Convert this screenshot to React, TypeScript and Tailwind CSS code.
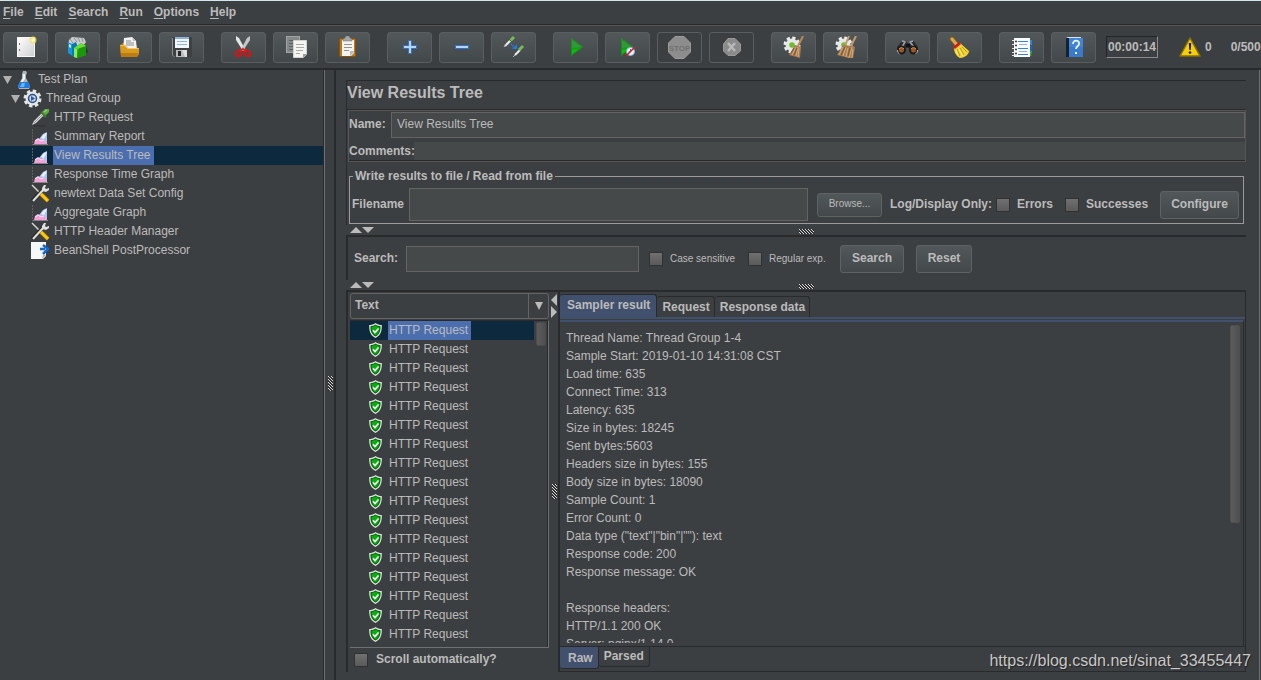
import React, { useState } from "react";

const menus = ["File", "Edit", "Search", "Run", "Options", "Help"];

const NewIcon = () => (
  <svg width="23" height="23" viewBox="0 0 23 23">
    <defs>
      <linearGradient id="page" x1="0" y1="0" x2="1" y2="1">
        <stop offset="0" stopColor="#ffffff" />
        <stop offset="1" stopColor="#cfcfd2" />
      </linearGradient>
    </defs>
    <rect x="3.500" y="1.500" width="17" height="19" fill="url(#page)" stroke="#f7f7f7" />
    <path d="M5 7h1v2H5zM5 13h1v2H5z" fill="#777" />
    <circle cx="19" cy="4" r="3.500" fill="#f5e65e" opacity=".8" />
    <circle cx="19" cy="4" r="1.500" fill="#fffef0" />
  </svg>
);

const TemplatesIcon = () => (
  <svg width="23" height="23" viewBox="0 0 23 23">
    <path d="M3 4l3-3 12 1 2 4-6 8L2 9z" fill="#c9cdd0" />
    <path d="M4 3l3 4M8 2l3 4M12 2l2 4M16 2l1 4" stroke="#8b9094" />
    <path d="M2 6l6 3v12l-6-4z" fill="#1796d6" />
    <path d="M3 8l2 1v3l-2-1z" fill="#c9edff" />
    <path d="M6 8l4-2 1 3v11l-3 1-2-2z" fill="#0a76b8" />
    <path d="M18 19l4-3-2-6z" fill="#1d2f24" opacity=".7" />
    <path d="M8 12l7-5 5 3v9l-9 3-3-1z" fill="#2fb012" />
    <path d="M13 12l7-2v9l-9 3z" fill="#1c970b" />
    <path d="M8 12l3 1v9l-3-1z" fill="#8ae85d" />
    <path d="M15 7l5 3-9 3-3-1z" fill="#6cdc35" />
  </svg>
);

const OpenIcon = () => (
  <svg width="23" height="23" viewBox="0 0 23 23">
    <path d="M2 9l2-2h4l2 2h9l1 11H3z" fill="#a86c08" />
    <path d="M6 2l8-1 4 4 1 9H5z" fill="#f2f2f2" />
    <path d="M14 1l1 4h3" fill="#c4c4c4" />
    <path d="M8 5h5M8 7h8M8 9h8" stroke="#8b8b8b" />
    <path d="M2 9h5l3 3h11v6l-2 3H3z" fill="#d89b22" />
    <path d="M2.500 9.500h4l3 3h11" stroke="#f2c868" fill="none" />
    <path d="M3 17h18l-2 4H3z" fill="#bd7d0e" />
  </svg>
);

const SaveIcon = () => (
  <svg width="23" height="23" viewBox="0 0 23 23">
    <path d="M2 2l1-1h18l1 1v19H4l-2-2z" fill="#3f4042" />
    <path d="M2.500 2v17l2 2" stroke="#8b8d90" fill="none" />
    <rect x="5" y="1" width="14" height="11" fill="#f1f6fb" />
    <rect x="5" y="1" width="14" height="2" fill="#8db3dc" />
    <path d="M7 5.500h10M7 8.500h10" stroke="#92b4da" />
    <rect x="6" y="14" width="11" height="7" fill="#b9bbbd" />
    <rect x="8" y="15" width="3" height="5" fill="#26282a" />
    <path d="M12 14h5v7h-2z" fill="#dedfe0" />
  </svg>
);

const CutIcon = () => (
  <svg width="23" height="23" viewBox="0 0 23 23">
    <path d="M4 0l3 2 6 11-2 2L4 4z" fill="#e4e4e4" />
    <path d="M18 0l-3 2-6 11 2 2 7-11z" fill="#c3c4c4" />
    <ellipse cx="6.500" cy="17.500" rx="3" ry="2.500" transform="rotate(-35 6.500 17.500)" fill="none" stroke="#d81313" strokeWidth="2" />
    <ellipse cx="15.500" cy="17.500" rx="3" ry="2.500" transform="rotate(35 15.500 17.500)" fill="none" stroke="#d81313" strokeWidth="2" />
    <path d="M8 15l3-2 3 2" stroke="#e32020" strokeWidth="2" fill="none" />
  </svg>
);

const CopyIcon = () => (
  <svg width="23" height="23" viewBox="0 0 23 23">
    <rect x="2.500" y=".5" width="13" height="16" fill="#858889" stroke="#a2a5a6" />
    <path d="M5 4.500h8M5 7.500h5M5 10.500h4M5 13.500h4" stroke="#5c6061" />
    <path d="M9.500 4.500h13v14l-3 3h-10z" fill="#f4f4f2" stroke="#d2d2d0" />
    <path d="M12 8.500h8M12 11.500h8M12 14.500h7M12 17.500h4" stroke="#a9a9a6" />
    <path d="M19 22v-4h4z" fill="#9b9b98" />
  </svg>
);

const PasteIcon = () => (
  <svg width="23" height="23" viewBox="0 0 23 23">
    <rect x="3.500" y="2.500" width="16" height="18" rx="1" fill="#b9791d" stroke="#8a5209" />
    <path d="M6 4h12v13l-3 3H6z" fill="#f3f3f1" />
    <path d="M8 8.500h8M8 11.500h8M8 14.500h5" stroke="#94948f" />
    <path d="M18 16v-1h-4v5z" fill="#bababa" />
    <path d="M7 5V3l2-1 1-2h3l1 2 2 1v2z" fill="#a4a6a8" stroke="#6d7072" strokeWidth=".5" />
  </svg>
);

const PlusIcon = () => (
  <svg width="23" height="23" viewBox="0 0 23 23">
    <path d="M10.500 4.500h3v5h5v3h-5v5h-3v-5h-5v-3h5z" fill="#b6d5f6" stroke="#3270c4" />
  </svg>
);

const MinusIcon = () => (
  <svg width="23" height="23" viewBox="0 0 23 23">
    <path d="M5.500 9.500h13v3h-13z" fill="#b6d5f6" stroke="#3270c4" />
  </svg>
);

const ToggleIcon = () => (
  <svg width="23" height="23" viewBox="0 0 23 23">
    <path d="M3 10l6-6" stroke="#eeeeee" strokeWidth="2" />
    <path d="M2 11l2-3" stroke="#b5b8b9" />
    <path d="M8 5l4-4" stroke="#79b956" strokeWidth="3" />
    <path d="M7 3l3 3" stroke="#3f6b2b" />
    <path d="M13 19l5-5" stroke="#eeeeee" strokeWidth="2" />
    <path d="M11 21l2-2" stroke="#b5b8b9" />
    <path d="M17 14l4-4" stroke="#79b956" strokeWidth="3" />
    <path d="M9 8l3 3" stroke="#2f7de2" strokeWidth="2" strokeDasharray="1 1" />
    <path d="M15 8v5h-5z" fill="#2378e8" />
  </svg>
);

const StartIcon = () => (
  <svg width="23" height="23" viewBox="0 0 23 23">
    <path d="M7 2l12 9-12 9z" fill="#0da30d" />
    <path d="M7 2l12 9-12 1z" fill="#2f9a36" />
    <path d="M7 14l9-1-9 6z" fill="#08c408" />
    <path d="M7.500 3l10.500 8-10.500 8z" fill="none" stroke="#1f8a22" />
  </svg>
);

const StartNoPausesIcon = () => (
  <svg width="23" height="23" viewBox="0 0 23 23">
    <path d="M5 2l12 9-12 9z" fill="#0da30d" />
    <path d="M5 2l12 9-12 1z" fill="#2f9a36" />
    <path d="M5 14l9-1-9 6z" fill="#08c408" />
    <path d="M5.500 3l10.500 8-10.500 8z" fill="none" stroke="#1f8a22" />
    <circle cx="14.500" cy="15.500" r="4" fill="#eef4fb" stroke="#86aedb" />
    <path d="M14.500 13v3h-2" stroke="#3a68a8" fill="none" />
    <path d="M10 20l9-9" stroke="#d31d1d" strokeWidth="1.500" />
  </svg>
);

const StopIcon = () => (
  <svg width="23" height="23" viewBox="0 0 23 23">
    <path d="M7 .5h9L22.500 7v9L16 22.500H7L.5 16V7z" fill="#8d8d8d" stroke="#9c9c9c" />
    <text x="11.500" y="15" textAnchor="middle" fontSize="8" fontWeight="bold" fill="#717171" fontFamily="Liberation Sans, sans-serif">STOP</text>
  </svg>
);

const ShutdownIcon = () => (
  <svg width="23" height="23" viewBox="0 0 23 23">
    <path d="M8 2.500h7l5.500 5.500v7L15 19.500H8L3.500 15V8z" fill="#8b8b8b" stroke="#9a9a9a" />
    <path d="M8 7l7 8M15 7l-7 8" stroke="#b9b9b9" strokeWidth="2.500" />
  </svg>
);

const GearShape = () => (
  <>
    <circle cx="10" cy="9" r="7" fill="none" stroke="#ececec" strokeWidth="3" strokeDasharray="3.200 2.300" />
    <circle cx="10" cy="9" r="6.500" fill="#e6e7e8" />
    <circle cx="10" cy="9" r="2.800" fill="#70bd2b" />
  </>
);

const ClearIcon = () => (
  <svg width="23" height="23" viewBox="0 0 23 23">
    <GearShape />
    <path d="M21 0l-5 10" stroke="#b98b55" strokeWidth="2" />
    <path d="M13 9l6 2-1 11-11-3z" fill="#a67c50" />
    <path d="M14 11l-4 8M16 11l-2 9M17 12l-1 9" stroke="#d3ab7c" />
    <path d="M12 12l-3 5M15 12l-3 7" stroke="#775431" />
  </svg>
);

const ClearAllIcon = () => (
  <svg width="23" height="23" viewBox="0 0 23 23">
    <GearShape />
    <path d="M15 0l-4 10M22 0l-5 10" stroke="#c49a68" strokeWidth="2" />
    <path d="M9 9l10 1 2 1-2 11h-5l-3-1-8-2z" fill="#a67c50" />
    <path d="M9 11l-4 8M12 11l-3 9M14 12l-2 9M18 11l-3 11M19 13l-1 9" stroke="#d3ab7c" />
    <path d="M11 11l-4 8M16 12l-2 8" stroke="#775431" />
  </svg>
);

const SearchIcon = () => (
  <svg width="23" height="23" viewBox="0 0 23 23">
    <path d="M6 5h4l2 3 2-3h4l4 6v4h-8v-3h-5v3H1v-4z" fill="#2b2d30" />
    <path d="M6 5l3 1-3 5M17 5l-3 1 4 5" stroke="#a3a6a8" strokeWidth="1.500" fill="none" />
    <path d="M10 8h4v3h-4z" fill="#111" />
    <circle cx="5.500" cy="14" r="3.500" fill="#9d5523" stroke="#1b1c1d" strokeWidth="2" />
    <circle cx="17.500" cy="14" r="3.500" fill="#9d5523" stroke="#1b1c1d" strokeWidth="2" />
    <path d="M3 13a3 3 0 0 1 5 0M15 13a3 3 0 0 1 5 0" stroke="#d68b4b" fill="none" />
    <path d="M1.500 14a4 4 0 0 0 2 4M21.500 14a4 4 0 0 1-2 4" stroke="#b4b7b9" fill="none" />
  </svg>
);

const ResetSearchIcon = () => (
  <svg width="23" height="23" viewBox="0 0 23 23">
    <path d="M4 3l5 6" stroke="#8d5a1b" strokeWidth="5" strokeLinecap="round" />
    <path d="M4 3l5 6" stroke="#dda850" strokeWidth="3" strokeLinecap="round" />
    <path d="M6 12l6-5 9 8c0 3-4 7-9 7-4-2-6-6-6-10z" fill="#f0d435" />
    <path d="M9 13l3 7M12 12l4 7M14 11l5 5" stroke="#b9951a" />
    <path d="M8 14l2 5M11 13l4 7" stroke="#fff18d" />
    <path d="M5 11l6-5 2 2-6 5z" fill="#cf1e1e" />
  </svg>
);

const FunctionIcon = () => (
  <svg width="23" height="23" viewBox="0 0 23 23">
    <path d="M19 4h3v5h-3z" fill="#2f84e8" />
    <path d="M19 10h3v5h-3z" fill="#1764c8" />
    <path d="M19 15h3l-1 5h-2z" fill="#2ab339" />
    <rect x="4" y="2" width="16" height="19" fill="#fbfcfd" />
    <path d="M8 5.500h10M8 12.500h10M8 18.500h10" stroke="#3b7fd9" />
    <path d="M9 8.500h8M9 15.500h8" stroke="#8eb2e6" />
    <path d="M2 4.500h5M2 8.500h5M2 12.500h5M2 16.500h5M2 19.500h5" stroke="#e8e8e8" />
    <path d="M5 5.500h2M5 9.500h2M5 13.500h2M5 17.500h2" stroke="#3f4346" strokeWidth="1.500" />
  </svg>
);

const HelpIcon = () => (
  <svg width="23" height="23" viewBox="0 0 23 23">
    <path d="M4 2l2-1h13v1z" fill="#dde6ef" />
    <path d="M4 2h4v19H4z" fill="#17222f" />
    <path d="M7 2h14v19H7z" fill="#4285d6" />
    <path d="M7 11h14v10H7z" fill="#397aca" />
    <path d="M11 8c0-5 7-4 6 0 0 2-3 2-3 5" stroke="#edf5ff" strokeWidth="1.800" fill="none" />
    <path d="M13 16h2v2h-2z" fill="#edf5ff" />
  </svg>
);

const toolGroups = [
  [
    { name: "New", icon: <NewIcon /> },
    { name: "Templates", icon: <TemplatesIcon /> },
    { name: "Open", icon: <OpenIcon /> },
    { name: "Save", icon: <SaveIcon /> },
  ],
  [
    { name: "Cut", icon: <CutIcon /> },
    { name: "Copy", icon: <CopyIcon /> },
    { name: "Paste", icon: <PasteIcon /> },
  ],
  [
    { name: "Expand All", icon: <PlusIcon /> },
    { name: "Collapse All", icon: <MinusIcon /> },
    { name: "Toggle", icon: <ToggleIcon /> },
  ],
  [
    { name: "Start", icon: <StartIcon /> },
    { name: "Start no pauses", icon: <StartNoPausesIcon /> },
    { name: "Stop", icon: <StopIcon />, disabled: true },
    { name: "Shutdown", icon: <ShutdownIcon />, disabled: true },
  ],
  [
    { name: "Clear", icon: <ClearIcon /> },
    { name: "Clear All", icon: <ClearAllIcon /> },
  ],
  [
    { name: "Search", icon: <SearchIcon /> },
    { name: "Reset Search", icon: <ResetSearchIcon /> },
  ],
  [
    { name: "Function Helper", icon: <FunctionIcon /> },
    { name: "Help", icon: <HelpIcon /> },
  ],
];

const FlaskIcon = () => (
  <svg width="19" height="19" viewBox="0 0 19 19">
    <path d="M7 4l1-3h3l1 2-1 2v3l4 8-1 3H4l-1-3 4-8z" fill="#aeb5bb" />
    <path d="M8 4h2v5l-3 4H5l3-5z" fill="#f1f4f6" />
    <path d="M5 12h8l2 4-1 2H4l-1-2z" fill="#1f7be0" />
    <path d="M7 13h3l-1 4H5z" fill="#6db6ff" />
  </svg>
);

const ThreadGroupIcon = () => (
  <svg width="19" height="19" viewBox="0 0 19 19">
    <circle cx="9.500" cy="9.500" r="7.500" fill="none" stroke="#e4e5e6" strokeWidth="3" strokeDasharray="3.400 2.490" />
    <circle cx="9.500" cy="9.500" r="7" fill="#e4e5e6" />
    <circle cx="9.500" cy="9.500" r="4" fill="#c2d4ec" stroke="#2b4f86" strokeWidth="1.500" />
    <path d="M8 7l4 2.500L8 12z" fill="#34588f" />
  </svg>
);

const SamplerIcon = () => (
  <svg width="19" height="19" viewBox="0 0 19 19">
    <path d="M3 18h12" stroke="#2c2e30" />
    <path d="M1 17l2-4 8-8 2 2-8 8z" fill="#dfe1e2" />
    <path d="M3 15l8-8" stroke="#8b8f92" />
    <path d="M10 5l4-4h4v3l-5 5z" fill="#5fa944" />
    <path d="M10 4l5 5" stroke="#3f7a2b" strokeWidth="2" />
    <path d="M13 4l3-2" stroke="#a7dd8c" />
  </svg>
);

const ListenerIcon = () => (
  <svg width="19" height="19" viewBox="0 0 19 19">
    <path d="M1.500 2v16" stroke="#5d6163" strokeDasharray="2 1" />
    <path d="M8 12l4-5 4-2v12h-4z" fill="#a7c6f2" />
    <path d="M10 11l3-4 3-1-3 6z" fill="#e9f3ff" />
    <path d="M3 17l1-4 3-2 3 2 3-1 3 5z" fill="#f0a3d6" />
    <path d="M4 14l3-2 3 2 3-1" stroke="#fbe0f2" fill="none" />
    <path d="M2 17.500h15" stroke="#8a7f88" />
  </svg>
);

const ConfigIcon = () => (
  <svg width="19" height="19" viewBox="0 0 19 19">
    <path d="M1 1l9 9" stroke="#d5d5d0" strokeWidth="1.500" />
    <path d="M1 17L13 5" stroke="#2b2d2f" strokeWidth="4" />
    <path d="M2 17L13 5" stroke="#e0e0de" strokeWidth="2" />
    <path d="M13 1h2l-1 3 1 1 3-1v2l-3 2-4-1V4z" fill="#e0e0de" />
    <path d="M10 10l7 7" stroke="#a87c04" strokeWidth="4" />
    <path d="M10 10l7 7" stroke="#f9c80e" strokeWidth="3" />
  </svg>
);

const PostProcessorIcon = () => (
  <svg width="19" height="19" viewBox="0 0 19 19">
    <path d="M0 1h15v14l-3 3H0z" fill="#f6f7f8" />
    <path d="M11 18l1-4h3z" fill="#b0b3b5" />
    <path d="M9 8h5M12 4l5 4-5 5" stroke="#1268cc" strokeWidth="2.500" fill="none" />
  </svg>
);

const treeNodes = [
  { name: "Test Plan", depth: 0, open: true, icon: <FlaskIcon /> },
  { name: "Thread Group", depth: 1, open: true, icon: <ThreadGroupIcon /> },
  { name: "HTTP Request", depth: 2, icon: <SamplerIcon /> },
  { name: "Summary Report", depth: 2, icon: <ListenerIcon /> },
  { name: "View Results Tree", depth: 2, icon: <ListenerIcon /> },
  { name: "Response Time Graph", depth: 2, icon: <ListenerIcon /> },
  { name: "newtext Data Set Config", depth: 2, icon: <ConfigIcon /> },
  { name: "Aggregate Graph", depth: 2, icon: <ListenerIcon /> },
  { name: "HTTP Header Manager", depth: 2, icon: <ConfigIcon /> },
  { name: "BeanShell PostProcessor", depth: 2, icon: <PostProcessorIcon /> },
];

const indents = ["pl-[3px]", "pl-[11px]", "pl-[19px]"];

const ShieldIcon = () => (
  <svg width="13" height="15" viewBox="0 0 13 15">
    <path d="M6.500 0c2 1.500 4 2 6.300 2 .3 6.500-1.600 10.800-6.300 13C1.800 12.800-.1 8.500.2 2 2.500 2 4.500 1.500 6.500 0z" fill="#dfe5df" />
    <path d="M6.500 1.500c1.500 1 3 1.600 5 1.700.2 5-1.300 8.400-5 10.300-3.700-1.900-5.200-5.300-5-10.300 2-.1 3.500-.7 5-1.700z" fill="#075c0b" />
    <path d="M6.500 2.500c1.300.8 2.500 1.300 4 1.500.1 4-1 6.700-4 8.400-3-1.700-4.100-4.400-4-8.400 1.500-.2 2.700-.7 4-1.500z" fill="#0bab12" />
    <path d="M4 7.200l2 2.300 3.500-4" stroke="#fff" strokeWidth="1.500" fill="none" />
  </svg>
);

const samples = Array.from({ length: 17 }, (_, i) => ({ id: i, label: "HTTP Request" }));

const resultLines = [
  "Thread Name: Thread Group 1-4",
  "Sample Start: 2019-01-10 14:31:08 CST",
  "Load time: 635",
  "Connect Time: 313",
  "Latency: 635",
  "Size in bytes: 18245",
  "Sent bytes:5603",
  "Headers size in bytes: 155",
  "Body size in bytes: 18090",
  "Sample Count: 1",
  "Error Count: 0",
  'Data type ("text"|"bin"|""): text',
  "Response code: 200",
  "Response message: OK",
  "",
  "Response headers:",
  "HTTP/1.1 200 OK",
  "Server: nginx/1.14.0",
];

const Grip = ({ vertical }: { vertical?: boolean }) => (
  <svg
    width={vertical ? 5 : 15}
    height={vertical ? 15 : 5}
    viewBox={vertical ? "0 0 5 15" : "0 0 15 5"}
    shapeRendering="crispEdges"
  >
    {Array.from({ length: 75 }, (_, i) => {
      const x = vertical ? i % 5 : i % 15;
      const y = vertical ? Math.floor(i / 5) : Math.floor(i / 15);
      const step = (x - y + 15) % 3;
      if (step === 2) return null;
      return <rect key={i} x={x} y={y} width="1" height="1" fill={step === 0 ? "#d8d8d8" : "#232628"} />;
    })}
  </svg>
);

const SplitBar = () => (
  <div className="relative flex h-[10px] shrink-0 items-center pl-1">
    <button aria-label="Collapse" className="flex">
      <svg width="12" height="6" viewBox="0 0 12 6">
        <path d="M0 6l6-6 6 6z" fill="#bbb" />
      </svg>
    </button>
    <button aria-label="Expand" className="flex">
      <svg width="12" height="6" viewBox="0 0 12 6">
        <path d="M0 0l6 6 6-6z" fill="#bbb" />
      </svg>
    </button>
    <div className="pointer-events-none absolute inset-0 flex items-center justify-center pt-[2px] pl-5">
      <Grip />
    </div>
  </div>
);

const Check = ({ id }: { id: string }) => (
  <input
    id={id}
    type="checkbox"
    className="h-[14px] w-[14px] shrink-0 appearance-none border border-[#2f3133] bg-linear-to-b from-[#707070] to-[#5a5a5a] checked:bg-[#4b6eaf]"
  />
);

const buttonStyle =
  "shrink-0 rounded-[3px] border border-[#5e6262] bg-linear-to-b from-[#52585a] to-[#43484a] pb-[2px] text-center";
const inputStyle = "min-w-0 border border-[#646464] bg-[#45494a] pb-[2px] outline-none";
const labelStyle = "shrink-0 pb-[2px] font-bold";

const App: React.FC = () => {
  const [tab, setTab] = useState("Sampler result");
  const [view, setView] = useState("Raw");

  return (
    <div className="relative flex h-screen flex-col overflow-hidden border-t border-[#d3e7ef] bg-[#3c3f41] font-['Liberation_Sans',Arial,sans-serif] text-xs text-[#bbbbbb]">
      <nav className="flex h-[24px] shrink-0 items-center gap-[11px] border-b border-[#282a2c] pb-[2px] pl-[3px] font-bold">
        {menus.map((m) => (
          <button key={m}>
            <span className="underline underline-offset-2">{m[0]}</span>
            {m.slice(1)}
          </button>
        ))}
      </nav>

      <div className="flex h-[45px] shrink-0 items-center border-t border-b-2 border-t-[#555555] border-b-[#282a2c] pl-[3px]">
        <div className="mr-[10px] flex shrink-0 gap-[17px]">
          {toolGroups.map((group, i) => (
            <div key={i} className="flex gap-[7px]">
              {group.map((tool) => (
                <button
                  key={tool.name}
                  aria-label={tool.name}
                  disabled={tool.disabled}
                  className="flex h-[31px] w-[45px] items-center justify-center rounded-[3px] border border-[#5a5e60] bg-linear-to-b from-[#52585a] to-[#43484a] disabled:bg-none"
                >
                  {tool.icon}
                </button>
              ))}
            </div>
          ))}
        </div>
        <time className="flex h-[22px] w-[52px] shrink-0 items-center justify-center border border-t-[#222426] border-r-[#8b8b8b] border-b-[#8b8b8b] border-l-[#222426] font-bold">
          00:00:14
        </time>
        <svg width="22" height="20" viewBox="0 0 22 20" className="ml-[21px] shrink-0">
          <path d="M11 1l10 18H1z" fill="#f5cf0b" stroke="#8a7105" strokeWidth="1.500" strokeLinejoin="round" />
          <path d="M9.800 6h2.400l-.5 7h-1.400z" fill="#1d1d1d" />
          <circle cx="11" cy="15.500" r="1.300" fill="#1d1d1d" />
        </svg>
        <span className="ml-1 shrink-0 font-bold">0</span>
        <span className="ml-[19px] shrink-0 font-bold">0/500</span>
      </div>

      <div className="flex min-h-0 flex-1">
        <aside className="w-[325px] shrink-0 border-r border-[#6e7173]">
          <ul className="h-full border-r border-[#282a2c]">
            {treeNodes.map((node) => {
              const selected = node.name === "View Results Tree";
              return (
                <li
                  key={node.name}
                  className={`flex h-[19px] items-center gap-[3px] ${indents[node.depth]} ${selected ? "bg-[#0d293e]" : ""}`}
                >
                  <svg width="9" height="8" viewBox="0 0 9 8" className="shrink-0">
                    {node.open && <path d="M0 0h9L4.500 8z" fill="#b0b0b0" />}
                  </svg>
                  {node.icon}
                  <span className={`h-[19px] pr-[3px] pl-px leading-[18px] ${selected ? "bg-[#4b6eaf]" : ""}`}>{node.name}</span>
                </li>
              );
            })}
          </ul>
        </aside>

        <div className="flex w-[9px] shrink-0 items-center justify-center pt-4 pl-[2px]">
          <Grip vertical />
        </div>

        <main className="mr-px flex min-w-0 flex-1 flex-col border-r border-l-2 border-r-[#6e7173] border-l-[#282a2c] pt-[10px] pr-[13px] pb-2 pl-[10px]">
          <section className="shrink-0 border-t border-l border-[#282a2c] pb-px">
            <h1 className="h-7 text-base leading-[23px] font-bold">View Results Tree</h1>
            <div className="border-t border-[#282a2c] pl-px">
              <div className="border border-[#555555]">
                <div className="flex flex-col gap-1 border-b border-[#282a2c] pt-px">
                  <div className="flex items-center">
                    <label htmlFor="name" className={`w-[42px] ${labelStyle}`}>
                      Name:
                    </label>
                    <input id="name" defaultValue="View Results Tree" className={`h-[26px] flex-1 px-[5px] ${inputStyle}`} />
                  </div>
                  <div className="flex items-center">
                    <label htmlFor="comments" className="w-[65px] shrink-0 font-bold">
                      Comments:
                    </label>
                    <input id="comments" className="h-[18px] min-w-0 flex-1 bg-[#45494a] outline-none" />
                  </div>
                </div>
              </div>
            </div>

            <fieldset className="mx-[2px] mt-[5px] border border-[#9a9a9a]">
              <legend className="ml-[3px] h-[19px] px-[2px] leading-[18px] font-bold">
                Write results to file / Read from file
              </legend>
              <div className="flex items-center py-[2px] pr-1 pl-[2px]">
                <label htmlFor="filename" className={`w-[57px] ${labelStyle}`}>
                  Filename
                </label>
                <input id="filename" className={`h-[33px] flex-1 px-1 ${inputStyle}`} />
                <button className={`mr-2 ml-[9px] h-6 w-[65px] text-[10px] ${buttonStyle}`}>Browse...</button>
                <span className={`w-[106px] ${labelStyle}`}>Log/Display Only:</span>
                <Check id="errors" />
                <label htmlFor="errors" className={`w-[55px] pl-[7px] ${labelStyle}`}>
                  Errors
                </label>
                <Check id="successes" />
                <label htmlFor="successes" className={`w-[81px] pl-[7px] ${labelStyle}`}>
                  Successes
                </label>
                <button className={`h-7 w-[79px] font-bold ${buttonStyle}`}>Configure</button>
              </div>
            </fieldset>
          </section>

          <SplitBar />

          <section className="flex h-[45px] shrink-0 items-center border-t-2 border-l-2 border-[#282a2c] pt-px pl-[6px]">
            <label htmlFor="search" className={`w-[52px] ${labelStyle}`}>
              Search:
            </label>
            <input id="search" className={`h-[26px] w-[233px] px-1 ${inputStyle}`} />
            <div className="ml-[10px] flex items-center text-[10px]">
              <Check id="case" />
              <label htmlFor="case" className="w-[85px] shrink-0 pl-[7px]">
                Case sensitive
              </label>
              <Check id="regexp" />
              <label htmlFor="regexp" className="w-[78px] shrink-0 pl-[7px]">
                Regular exp.
              </label>
            </div>
            <button className={`h-7 w-[64px] font-bold ${buttonStyle}`}>Search</button>
            <button className={`ml-3 h-7 w-[56px] font-bold ${buttonStyle}`}>Reset</button>
          </section>

          <SplitBar />

          <section className="flex min-h-0 flex-1 border-t-2 border-l-2 border-[#282a2c]">
            <div className="flex w-[201px] shrink-0 flex-col pt-px pl-[2px]">
              <div className="relative shrink-0">
                <select
                  aria-label="Renderer"
                  className="h-[26px] w-full appearance-none rounded-[3px] border border-[#646464] bg-[#3c3f41] pb-[2px] pl-1 font-bold outline-none"
                >
                  <option>Text</option>
                </select>
                <div className="pointer-events-none absolute inset-y-px right-px flex w-5 items-center justify-center border-l border-[#646464]">
                  <svg width="8" height="8" viewBox="0 0 8 8">
                    <path d="M0 0h8L4 8z" fill="#bbb" />
                  </svg>
                </div>
              </div>
              <div className="mt-px flex min-h-0 flex-1 border-t border-r border-b border-t-[#282a2c] border-r-[#6e7173] border-b-[#6e7173]">
                <ul className="min-w-0 flex-1 overflow-hidden">
                  {samples.map((s) => (
                    <li key={s.id} className={`flex h-[19px] items-center gap-[6px] pl-[19px] ${s.id === 0 ? "bg-[#0d293e]" : ""}`}>
                      <ShieldIcon />
                      <span className={`h-[19px] pr-[3px] pl-px leading-[18px] ${s.id === 0 ? "bg-[#4b6eaf]" : ""}`}>{s.label}</span>
                    </li>
                  ))}
                </ul>
                <div className="w-[14px] border-r border-[#282a2c] pt-px pl-[2px]">
                  <div className="h-6 w-[10px] rounded-xs border border-[#4c4c4c] bg-linear-to-r from-[#5c5c5c] to-[#4f4f4f]" />
                </div>
              </div>
              <div className="flex h-6 shrink-0 items-center pl-1">
                <Check id="scroll" />
                <label htmlFor="scroll" className={`pl-2 ${labelStyle}`}>
                  Scroll automatically?
                </label>
              </div>
            </div>

            <div className="relative flex w-[9px] shrink-0 flex-col items-center pt-[2px]">
              <button aria-label="Collapse left">
                <svg width="6" height="12" viewBox="0 0 6 12">
                  <path d="M6 0v12L0 6z" fill="#bbb" />
                </svg>
              </button>
              <button aria-label="Expand left">
                <svg width="6" height="12" viewBox="0 0 6 12">
                  <path d="M0 0v12l6-6z" fill="#bbb" />
                </svg>
              </button>
              <div className="pointer-events-none absolute inset-0 flex items-center justify-center pt-[18px] pl-[2px]">
                <Grip vertical />
              </div>
            </div>

            <div className="flex min-w-0 flex-1 flex-col border-r border-b border-l-2 border-[#282a2c] pt-[2px]">
              <div role="tablist" className="flex h-[23px] shrink-0 items-end font-bold">
                {["Sampler result", "Request", "Response data"].map((t) => (
                  <button
                    key={t}
                    role="tab"
                    aria-selected={t === tab}
                    onClick={() => setTab(t)}
                    className={
                      t === tab
                        ? "h-[23px] rounded-t-[3px] border-t border-r border-[#282a2c] bg-[#41506d] pr-[6px] pl-[7px] pb-[2px]"
                        : "h-[21px] rounded-t-[3px] border-t border-r border-[#282a2c] pr-1 pl-[5px]"
                    }
                  >
                    {t}
                  </button>
                ))}
              </div>
              <div className="h-[2px] shrink-0 bg-[#41506d]" />
              <div className="mt-px mr-px flex min-h-0 flex-1 border-t-2 border-r border-t-[#41506d] border-r-[#282a2c] pb-[3px]">
                <div className="min-w-0 flex-1 overflow-hidden pt-[7px] pl-[6px] leading-[18px]">
                  {resultLines.map((line, i) => (
                    <p key={i} className="h-[18px]">
                      {line}
                    </p>
                  ))}
                </div>
                <div className="w-[13px] shrink-0 pt-[3px]">
                  <div className="h-[198px] w-[10px] rounded-xs border border-[#505050] bg-linear-to-r from-[#5c5c5c] to-[#4f4f4f]" />
                </div>
              </div>
              <div role="tablist" className="flex h-[25px] shrink-0 items-start border-t border-[#282a2c] font-bold">
                {["Raw", "Parsed"].map((v) => (
                  <button
                    key={v}
                    role="tab"
                    aria-selected={v === view}
                    onClick={() => setView(v)}
                    className={
                      v === view
                        ? "h-[22px] rounded-b-[3px] border-r border-b border-[#282a2c] bg-[#41506d] pr-[5px] pl-2"
                        : "h-5 rounded-b-[3px] border-r border-b border-[#282a2c] px-[5px] pb-[2px]"
                    }
                  >
                    {v}
                  </button>
                ))}
              </div>
            </div>
          </section>
        </main>
      </div>

      <span className="absolute right-[10px] bottom-[7px] text-base text-[#c8c8c8] [text-shadow:1px_1px_1px_#222]">
        https://blog.csdn.net/sinat_33455447
      </span>
    </div>
  );
};

export default App;
